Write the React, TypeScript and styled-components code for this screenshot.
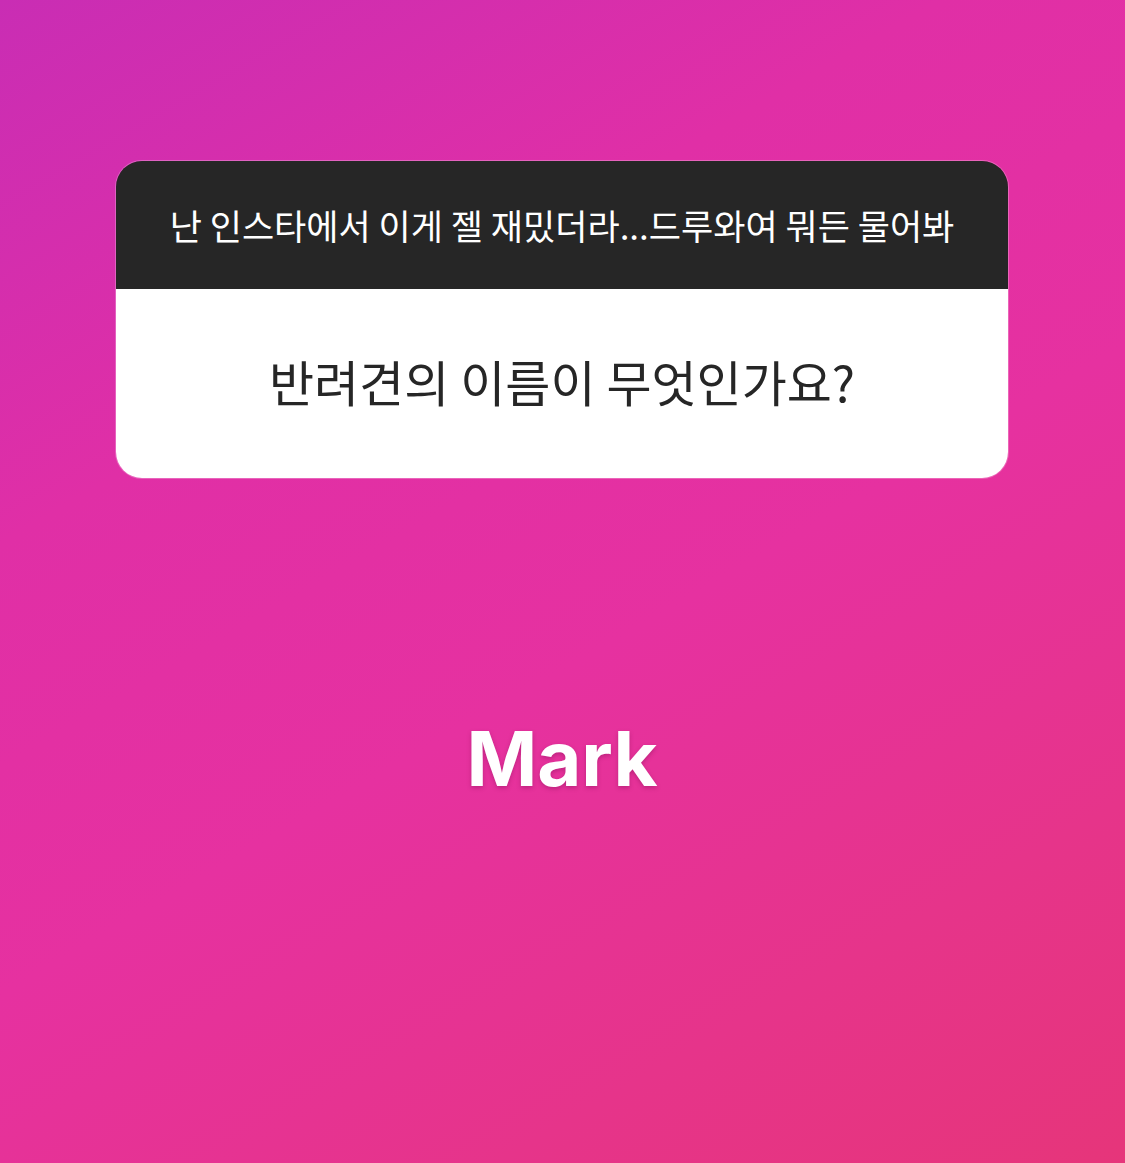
import React from 'react';
import styled, { createGlobalStyle } from 'styled-components';

const GlobalStyle = createGlobalStyle`
  html, body {
    margin: 0;
    padding: 0;
  }
  body {
    font-family: "Noto Sans CJK KR", "Noto Sans", sans-serif;
  }
`;

const Story = styled.main`
  width: 1125px;
  height: 1163px;
  box-sizing: border-box;
  padding: 161px 117px 0 116px;
  display: flex;
  flex-direction: column;
  align-items: stretch;
  background: linear-gradient(150deg, #c92db4 0%, #e02fa6 30%, #e631a0 55%, #e6348a 80%, #e6357a 100%);
  overflow: hidden;
`;

const QuestionCard = styled.section`
  display: flex;
  flex-direction: column;
  border-radius: 26px;
  overflow: hidden;
  box-shadow: 0 0 0 1px rgba(255, 255, 255, 0.25);
`;

const Prompt = styled.header`
  height: 128px;
  background: #262626;
  color: #ffffff;
  display: flex;
  align-items: center;
  justify-content: center;
  font-size: 35px;
  padding-bottom: 2px;
  box-sizing: border-box;
  white-space: nowrap;
`;

const Question = styled.div`
  height: 189px;
  background: #ffffff;
  color: #262626;
  display: flex;
  align-items: center;
  justify-content: center;
  font-size: 49px;
  padding-bottom: 6px;
  box-sizing: border-box;
  white-space: nowrap;
`;

const Answer = styled.div`
  margin-top: 230px;
  text-align: center;
  font-family: Inter, "Liberation Sans", sans-serif;
  font-weight: 700;
  font-size: 76px;
  line-height: 100px;
  color: #ffffff;
  text-shadow: 0 2px 4px rgba(140, 20, 90, 0.45);
`;

export default function App() {
  return (
    <>
      <GlobalStyle />
      <Story>
        <QuestionCard>
          <Prompt>난 인스타에서 이게 젤 재밌더라...드루와여 뭐든 물어봐</Prompt>
          <Question>반려견의 이름이 무엇인가요?</Question>
        </QuestionCard>
        <Answer>Mark</Answer>
      </Story>
    </>
  );
}
